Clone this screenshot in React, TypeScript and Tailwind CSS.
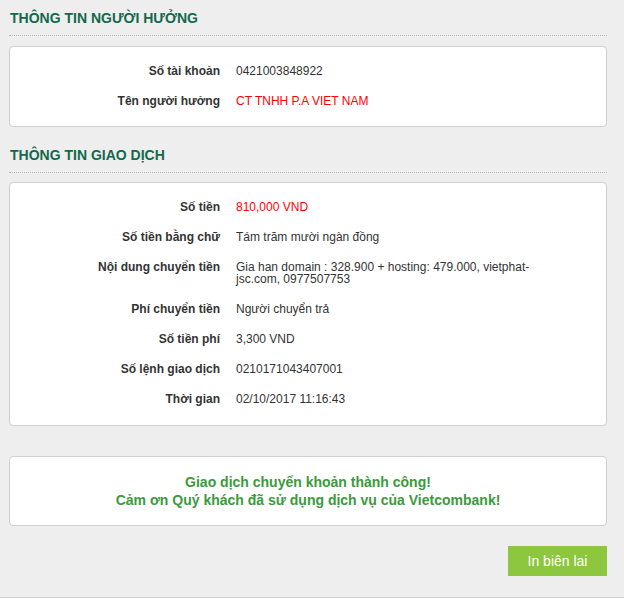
import * as React from "react";

type Row = { label: string; value: string; red?: boolean };

const beneficiary: Row[] = [
  { label: "Số tài khoản", value: "0421003848922" },
  { label: "Tên người hưởng", value: "CT TNHH P.A VIET NAM", red: true },
];

const transaction: Row[] = [
  { label: "Số tiền", value: "810,000 VND", red: true },
  { label: "Số tiền bằng chữ", value: "Tám trăm mười ngàn đồng" },
  {
    label: "Nội dung chuyển tiền",
    value: "Gia han domain : 328.900 + hosting: 479.000, vietphat-jsc.com, 0977507753",
  },
  { label: "Phí chuyển tiền", value: "Người chuyển trả" },
  { label: "Số tiền phí", value: "3,300 VND" },
  { label: "Số lệnh giao dịch", value: "0210171043407001" },
  { label: "Thời gian", value: "02/10/2017 11:16:43" },
];

function SectionTitle({ children }: { children: React.ReactNode }) {
  return (
    <div className="border-b border-dotted border-[#b5b5b5] pb-[7px] pl-px">
      <h2 className="text-[14px] leading-[20px] font-bold text-[#14684d]">{children}</h2>
    </div>
  );
}

function InfoCard({ rows, className }: { rows: Row[]; className: string }) {
  return (
    <div className={"rounded-[4px] border border-[#cfcfcf] bg-white " + className}>
      {rows.map((r) => (
        <div key={r.label} className="flex py-[9px] text-[12px] leading-[12px]">
          <div className="w-[210px] shrink-0 text-right font-bold text-[#333]">{r.label}</div>
          <div className={"ml-[16px] w-[312px] " + (r.red ? "text-[#ff0000]" : "text-[#333]")}>
            {r.value}
          </div>
        </div>
      ))}
    </div>
  );
}

export default function App() {
  return (
    <div
      className="min-h-[598px] border-b border-[#d4d4d4] bg-[#eeeeee] pt-[8px]"
      style={{ fontFamily: '"Liberation Sans", Arial, sans-serif' }}
    >
      <div className="ml-[9px] w-[598px] pb-[20px]">
        <SectionTitle>THÔNG TIN NGƯỜI HƯỞNG</SectionTitle>
        <InfoCard rows={beneficiary} className="mt-[10px] pt-[9px] pb-[10px]" />

        <div className="mt-[18px]">
          <SectionTitle>THÔNG TIN GIAO DỊCH</SectionTitle>
        </div>
        <InfoCard rows={transaction} className="mt-[9px] pt-[9px] pb-[11px]" />

        <div className="mt-[30px] rounded-[4px] border border-[#cfcfcf] bg-white py-[16px] text-center text-[14px] leading-[18px] font-bold text-[#3b9a3b]">
          <p>Giao dịch chuyển khoản thành công!</p>
          <p>Cảm ơn Quý khách đã sử dụng dịch vụ của Vietcombank!</p>
        </div>

        <div className="mt-[20px] flex justify-end">
          <button className="h-[30px] w-[99px] bg-[#8dc63f] text-[14px] text-white">In biên lai</button>
        </div>
      </div>
    </div>
  );
}
